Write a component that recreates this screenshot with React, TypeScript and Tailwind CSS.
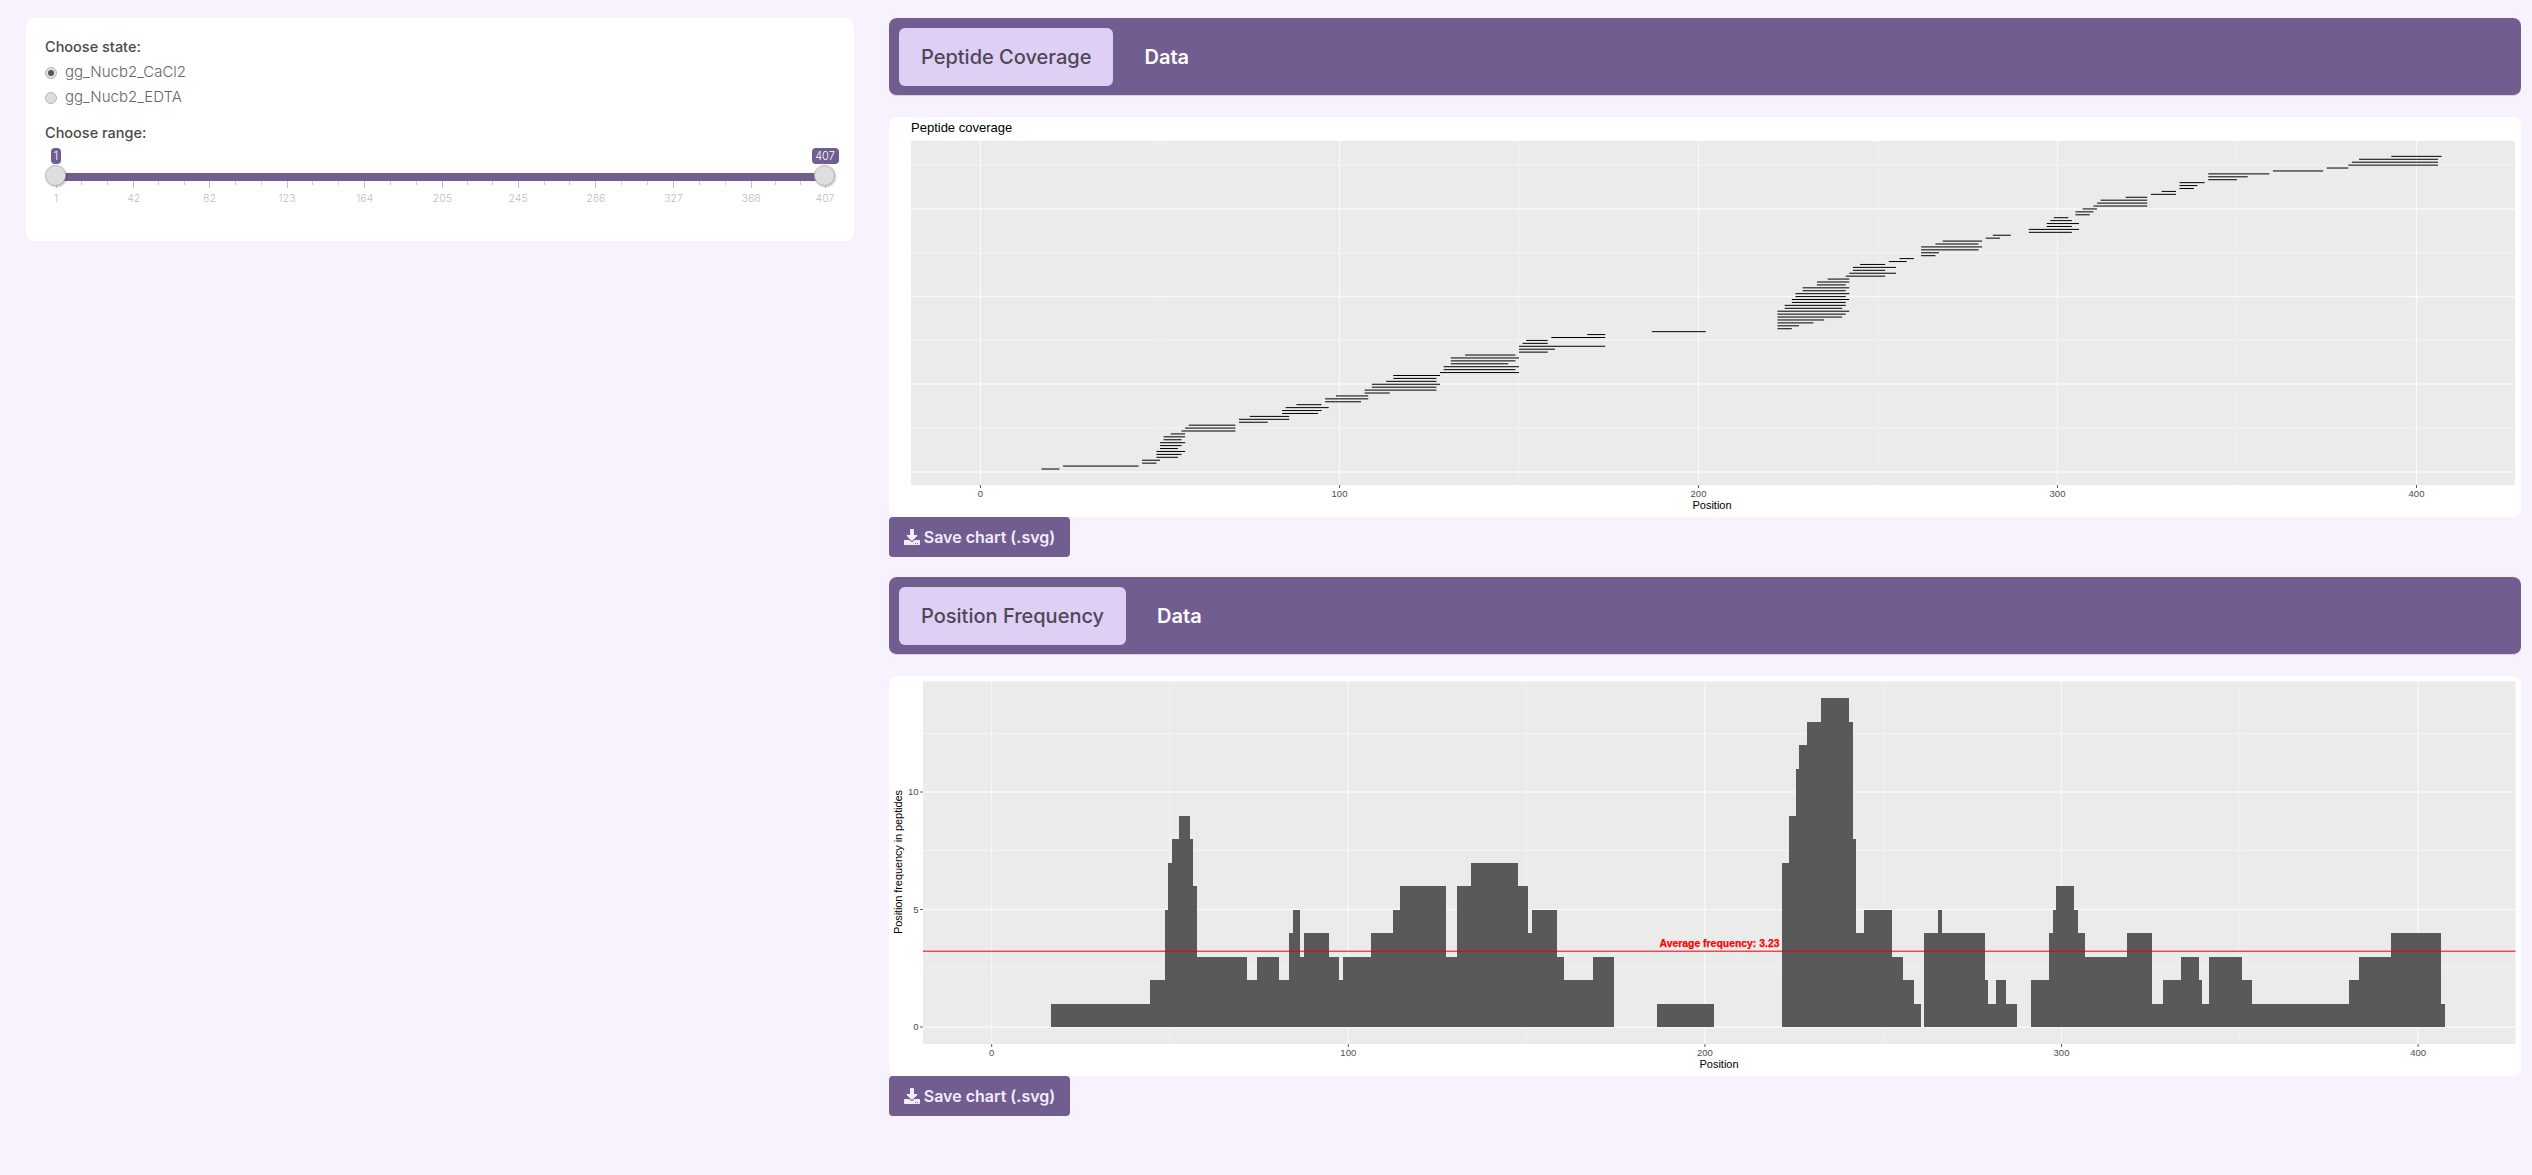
import { FaDownload } from 'react-icons/fa';

const sans = { fontFamily: '"Liberation Sans", Arial, sans-serif' };

// [start, end] of each peptide, bottom row first
const peptides: [number, number][] = [
  [17, 22], [23, 44], [45, 49], [45, 50], [49, 55], [49, 56], [49, 57], [50, 55], [50, 56], [50, 57], [51, 56], [51, 57],
  [53, 57], [56, 71], [57, 71], [58, 71], [72, 80], [72, 86], [75, 86], [84, 94], [84, 95], [85, 97], [88, 95], [96, 106],
  [96, 108], [99, 108], [107, 114], [107, 127], [109, 127], [109, 128], [113, 127], [115, 127], [115, 128], [128, 150],
  [129, 149], [129, 150], [131, 147], [131, 149], [131, 150], [135, 149], [150, 158], [150, 160], [150, 174], [151, 158],
  [152, 158], [159, 174], [169, 174], [187, 202],
  [222, 226], [222, 228], [222, 232], [222, 235], [222, 240], [222, 241], [222, 242], [224, 240], [224, 241], [226, 241],
  [226, 242], [227, 241], [227, 242], [229, 241], [229, 242], [233, 241], [233, 242], [236, 242], [241, 252], [242, 255],
  [243, 252], [243, 255], [245, 252], [253, 258], [256, 260], [262, 266], [262, 267], [262, 278], [262, 279], [266, 278],
  [268, 279], [280, 284], [282, 287], [292, 304], [292, 306], [297, 304], [297, 306], [298, 304], [299, 303], [305, 309],
  [305, 310], [307, 311], [310, 325], [311, 325], [312, 325], [319, 325], [326, 333], [329, 333], [334, 338], [334, 339],
  [334, 341], [342, 350], [342, 353], [342, 359], [360, 374], [375, 381], [381, 406], [382, 406], [384, 406], [393, 407],
];

// [first position, frequency] for each step of the histogram
const steps: [number, number][] = [
  [17, 1], [45, 2], [49, 5], [50, 7], [51, 8], [53, 9], [56, 8], [57, 6], [58, 3], [72, 2], [75, 3], [81, 2], [84, 4], [85, 5],
  [87, 3], [88, 4], [95, 3], [98, 2], [99, 3], [107, 4], [113, 5], [115, 6], [128, 3], [131, 6], [135, 7], [148, 6], [151, 4],
  [152, 5], [159, 3], [161, 2], [169, 3], [175, 0], [187, 1], [203, 0], [222, 7], [224, 9], [226, 11], [227, 12], [229, 13],
  [233, 14], [241, 13], [242, 8], [243, 4], [245, 5], [253, 3], [256, 2], [259, 1], [261, 0], [262, 4], [266, 5], [267, 4],
  [279, 2], [280, 1], [282, 2], [285, 1], [288, 0], [292, 2], [297, 4], [298, 5], [299, 6], [304, 5], [305, 4], [307, 3],
  [319, 4], [326, 1], [329, 2], [334, 3], [339, 2], [340, 1], [342, 3], [351, 2], [354, 1], [381, 2], [384, 3], [393, 4],
  [407, 1], [408, 0],
];

const sliderTicks = [1, 42, 82, 123, 164, 205, 245, 286, 327, 368, 407];

function PanelGrid(props: { x0: number; x1: number; y0: number; y1: number; scale: number; zero: number; major: number[]; minor: number[] }) {
  const { x0, x1, y0, y1, scale, zero, major, minor } = props;
  return (
    <g>
      <rect x={x0} y={y0} width={x1 - x0} height={y1 - y0} fill="#ebebeb" />
      {minor.map(y => <line key={y} x1={x0} x2={x1} y1={y} y2={y} stroke="#f4f4f4" strokeWidth={1} />)}
      {major.map(y => <line key={y} x1={x0} x2={x1} y1={y} y2={y} stroke="#f8f8f8" strokeWidth={1.6} />)}
      {[50, 150, 250, 350].map(p => (
        <line key={p} x1={zero + p * scale} x2={zero + p * scale} y1={y0} y2={y1} stroke="#f4f4f4" strokeWidth={0.8} />
      ))}
      {[0, 100, 200, 300, 400].map(p => (
        <g key={p}>
          <line x1={zero + p * scale} x2={zero + p * scale} y1={y0} y2={y1} stroke="#fafafa" strokeWidth={1.1} />
          <line x1={zero + p * scale} x2={zero + p * scale} y1={y1} y2={y1 + 3} stroke="#333333" strokeWidth={0.8} />
          <text x={zero + p * scale} y={y1 + 11.5} textAnchor="middle" fontSize={9.5} fill="#4d4d4d" style={sans}>{p}</text>
        </g>
      ))}
    </g>
  );
}

function CoverageChart() {
  const x = (p: number) => 980.5 + 3.59 * p;
  return (
    <svg viewBox="889 117 1632 400" className="block w-full h-full">
      <text x={911} y={132} fontSize={13} fill="#000000" style={sans}>Peptide coverage</text>
      <PanelGrid x0={911} x1={2515} y0={141} y1={485} scale={3.59} zero={980.5} major={[209, 296.5, 384, 472]} minor={[165, 253, 340, 428]} />
      {peptides.map(([a, b], i) => {
        const y = 469 - i * 2.922;
        return <line key={i} x1={x(a)} x2={x(b)} y1={y} y2={y} stroke="#000000" strokeWidth={1} />;
      })}
      <text x={1712} y={509} textAnchor="middle" fontSize={11} fill="#000000" style={sans}>Position</text>
    </svg>
  );
}

function FrequencyChart() {
  const x = (p: number) => 991.7 + 3.566 * p;
  const y = (v: number) => 1027 - 23.5 * v;
  return (
    <svg viewBox="889 676 1632 400" className="block w-full h-full">
      <PanelGrid x0={923} x1={2515.5} y0={681.5} y1={1044} scale={3.566} zero={991.7} major={[792, 909.5, 1027]} minor={[733.5, 850.5, 968]} />
      {steps.slice(0, -1).map(([p, v], i) => (
        <rect key={p} x={x(p - 0.5)} y={y(v)} width={x(steps[i + 1][0] - 0.5) - x(p - 0.5)} height={y(0) - y(v)} fill="#595959" shapeRendering="crispEdges" />
      ))}
      <line x1={923} x2={2515.5} y1={951.2} y2={951.2} stroke="#e60000" strokeWidth={1} />
      <text x={1659.5} y={947} fontSize={10.5} fontWeight={700} fill="#ff0000" stroke="#ff0000" strokeWidth={0.25} textLength={120} lengthAdjust="spacingAndGlyphs" style={sans}>Average frequency: 3.23</text>
      {[0, 5, 10].map(v => (
        <g key={v}>
          <line x1={920} x2={923} y1={y(v)} y2={y(v)} stroke="#333333" strokeWidth={0.8} />
          <text x={918.5} y={y(v) + 3.4} textAnchor="end" fontSize={9.5} fill="#4d4d4d" style={sans}>{v}</text>
        </g>
      ))}
      <text transform="translate(902 862) rotate(-90)" textAnchor="middle" fontSize={11} fill="#000000" textLength={144} style={sans}>Position frequency in peptides</text>
      <text x={1719} y={1068} textAnchor="middle" fontSize={11} fill="#000000" style={sans}>Position</text>
    </svg>
  );
}

function TabBar({ active }: { active: string }) {
  return (
    <div className="flex items-center h-[78px] pl-[10px] gap-[31px] bg-[#715d8f] rounded-lg border-b border-[#d9d3e0]">
      <div className="flex items-center h-[58px] px-[22px] rounded-md bg-[#dfcff5] text-[#4e4755] text-[20px] font-medium">{active}</div>
      <div className="text-white text-[20px] font-semibold">Data</div>
    </div>
  );
}

function SaveButton() {
  return (
    <div className="flex items-center justify-center gap-[4px] w-[181px] h-[40px] rounded bg-[#715d8f] text-[#f3ecff] text-[16px] font-semibold">
      <FaDownload className="w-[16px] h-[16px]" />
      <span>Save chart (.svg)</span>
    </div>
  );
}

function RadioRow({ label, checked }: { label: string; checked?: boolean }) {
  return (
    <div className="flex items-center gap-[8px] h-[25px]">
      <div className="flex items-center justify-center w-[12px] h-[12px] rounded-full bg-[#dedede] border border-[#b5b5b5]">
        {checked && <div className="w-[6px] h-[6px] rounded-full bg-[#555555]" />}
      </div>
      <span className="text-[15px] font-light text-[#666666]">{label}</span>
    </div>
  );
}

function RangeSlider() {
  const pct = (v: number) => `${((v - 1) / 406) * 100}%`;
  return (
    <div className="relative h-[60px] ml-[10.5px] w-[769px]">
      <div className="absolute left-0 right-0 top-[25px] h-[8px] bg-[#715d8f]" />
      {sliderTicks.map(t => (
        <div key={t} className="absolute top-[33px] w-[1px] h-[7px] bg-[#a9c8e4]" style={{ left: pct(t) }}>
          <span className="absolute top-[10px] left-1/2 -translate-x-1/2 text-[10.5px] font-light text-[#bdbdbd]">{t}</span>
        </div>
      ))}
      {sliderTicks.slice(0, -1).map((t, i) => [1, 2].map(n => (
        <div key={`${t}-${n}`} className="absolute top-[33px] w-[1px] h-[4px] bg-[#cccccc]" style={{ left: pct(t + ((sliderTicks[i + 1] - t) * n) / 3) }} />
      )))}
      <div className="absolute left-[-4.5px] top-0 w-[10px] h-[16px] rounded bg-[#715d8f] text-white text-[11px] font-light flex items-center justify-center">1</div>
      <div className="absolute right-[-14px] top-0 w-[27px] h-[16px] rounded bg-[#715d8f] text-white text-[11px] font-light flex items-center justify-center">407</div>
      <div className="absolute left-[-10.5px] top-[17px] w-[21px] h-[21px] rounded-full bg-[#dedede] border border-[#b9b9b9] shadow-[1px_1px_2px_rgba(0,0,0,0.25)]" />
      <div className="absolute right-[-10.5px] top-[17px] w-[21px] h-[21px] rounded-full bg-[#dedede] border border-[#b9b9b9] shadow-[1px_1px_2px_rgba(0,0,0,0.25)]" />
    </div>
  );
}

export default function App() {
  return (
    <div className="flex items-start gap-[35px] min-h-screen bg-[#f8f2ff] pt-[18px] pl-[26px] pr-[11px] font-['Inter',sans-serif]">
      <div className="w-[828px] h-[223px] shrink-0 rounded-lg bg-white pl-[19px] pt-[20px]">
        <div className="text-[14.5px] font-medium text-[#4a4a4a] leading-[18px]">Choose state:</div>
        <div className="mt-[4px]">
          <RadioRow label="gg_Nucb2_CaCl2" checked />
          <RadioRow label="gg_Nucb2_EDTA" />
        </div>
        <div className="mt-[14px] text-[14.5px] font-medium text-[#4a4a4a] leading-[18px]">Choose range:</div>
        <div className="mt-[6px]">
          <RangeSlider />
        </div>
      </div>
      <div className="flex-1 flex flex-col">
        <TabBar active="Peptide Coverage" />
        <div className="mt-[21px] h-[400px] rounded-lg bg-white overflow-hidden">
          <CoverageChart />
        </div>
        <SaveButton />
        <div className="mt-[20px]">
          <TabBar active="Position Frequency" />
        </div>
        <div className="mt-[21px] h-[400px] rounded-lg bg-white overflow-hidden">
          <FrequencyChart />
        </div>
        <SaveButton />
      </div>
    </div>
  );
}
